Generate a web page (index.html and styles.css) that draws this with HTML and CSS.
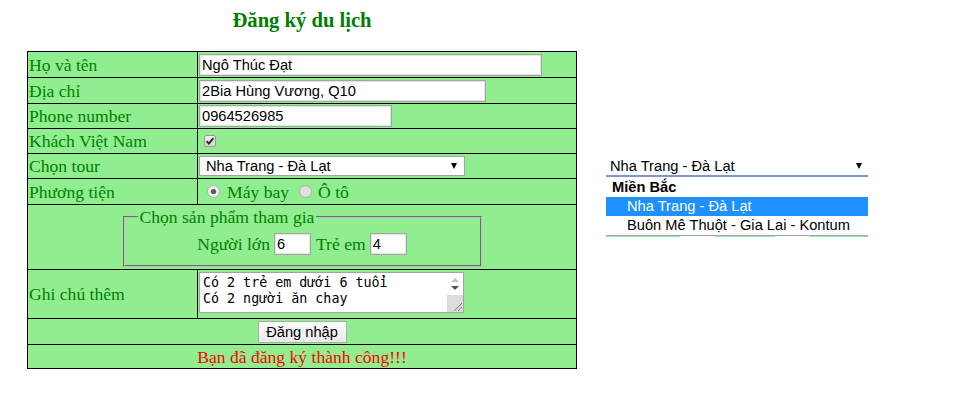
FILE: index.html
```html
<!DOCTYPE html>
<html lang="vi">
<head>
<meta charset="utf-8">
<title>Đăng ký du lịch</title>
<link rel="stylesheet" href="styles.css">
</head>
<body>
<div class="page">
  <h3 class="title">Đăng ký du lịch</h3>
  <table class="form">
    <tr class="r26">
      <td class="label">Họ và tên</td>
      <td class="field"><div class="input w-name">Ngô Thúc Đạt</div></td>
    </tr>
    <tr class="r26">
      <td class="label">Địa chỉ</td>
      <td class="field"><div class="input w-addr">2Bia Hùng Vương, Q10</div></td>
    </tr>
    <tr class="r25">
      <td class="label">Phone number</td>
      <td class="field"><div class="input w-phone">0964526985</div></td>
    </tr>
    <tr class="r25">
      <td class="label">Khách Việt Nam</td>
      <td class="field">
        <svg class="checkbox" width="12" height="12" viewBox="0 0 12 12">
          <defs><linearGradient id="cbg" x1="0" y1="0" x2="0" y2="1"><stop offset="0" stop-color="#f2f2f2"/><stop offset="1" stop-color="#d2d2d2"/></linearGradient></defs>
          <rect x="0.5" y="0.5" width="11" height="11" rx="1.5" fill="url(#cbg)" stroke="#9a9a9a"/>
          <path d="M2.6 6.2 L4.8 8.6 L9.4 3.2" fill="none" stroke="#222" stroke-width="1.8"/>
        </svg>
      </td>
    </tr>
    <tr class="r25">
      <td class="label">Chọn tour</td>
      <td class="field field-bottom">
        <div class="select w-tour"><span>Nha Trang - Đà Lạt</span><span class="arrow"></span></div>
      </td>
    </tr>
    <tr class="r25">
      <td class="label">Phương tiện</td>
      <td class="field">
        <div class="radios">
          <svg class="radio" width="13" height="13" viewBox="0 0 13 13">
            <circle cx="6.5" cy="6.5" r="6" fill="#ececec" stroke="#b4b4b4"/>
            <circle cx="6.5" cy="6.5" r="2.6" fill="#5a5a5a"/>
          </svg>
          <span class="radio-text">Máy bay</span>
          <svg class="radio radio2" width="13" height="13" viewBox="0 0 13 13">
            <circle cx="6.5" cy="6.5" r="6" fill="#e0e0e0" stroke="#adadad"/>
          </svg>
          <span class="radio-text">Ô tô</span>
        </div>
      </td>
    </tr>
    <tr class="r65">
      <td colspan="2" class="center">
        <fieldset class="group">
          <legend>Chọn sản phẩm tham gia</legend>
          <div class="group-row">
            <span>Người lớn</span><div class="input w-num">6</div>
            <span class="gap">Trẻ em</span><div class="input w-num">4</div>
          </div>
        </fieldset>
      </td>
    </tr>
    <tr class="r49">
      <td class="label">Ghi chú thêm</td>
      <td class="field field-top">
        <div class="textarea">
          <div class="ta-text">Có 2 trẻ em dưới 6 tuổi<br>Có 2 người ăn chay</div>
          <div class="ta-scroll">
            <div class="ta-arrows"><span class="up"></span><span class="down"></span></div>
            <div class="ta-track"><span class="grip"></span></div>
          </div>
        </div>
      </td>
    </tr>
    <tr class="r26">
      <td colspan="2" class="center"><div class="button">Đăng nhập</div></td>
    </tr>
    <tr class="r24">
      <td colspan="2" class="center message">Bạn đã đăng ký thành công!!!</td>
    </tr>
  </table>
</div>

<div class="popup">
  <div class="popup-select"><span>Nha Trang - Đà Lạt</span><span class="arrow"></span></div>
  <div class="popup-list">
    <div class="optgroup">Miền Bắc</div>
    <div class="option selected">Nha Trang - Đà Lạt</div>
    <div class="option">Buôn Mê Thuột - Gia Lai - Kontum</div>
  </div>
  <div class="popup-under"></div>
</div>
</body>
</html>
```

FILE: styles.css
```css
body {
  margin: 8px;
  font-family: "Liberation Serif", "Times New Roman", serif;
  font-size: 17.6px;
  color: #000;
  background: #fff;
}

.page {
  width: 550px;
  margin-left: 19px;
}

.title {
  margin: 0 0 19px;
  font-size: 20.6px;
  line-height: 24px;
  font-weight: bold;
  color: #008000;
  text-align: center;
}

.form {
  width: 550px;
  border-collapse: collapse;
  background: #90ee90;
  color: #008000;
}

.form td {
  border: 1px solid #000;
  padding: 1px;
  vertical-align: middle;
  line-height: 20px;
}

.r26 { height: 26px; }
.r25 { height: 25px; }
.r24 { height: 24px; }
.r65 { height: 65px; }
.r49 { height: 49px; }

.label {
  width: 167px;
  white-space: nowrap;
}

.field-bottom {
  vertical-align: bottom;
}

.form td.field-top {
  vertical-align: top;
}

.center {
  text-align: center;
}

.input {
  box-sizing: border-box;
  height: 22px;
  border: 1px solid #a3a3a3;
  box-shadow: inset 0 0 0 1px #e4e4e4;
  background: #fff;
  padding: 0 2px;
  font-family: "Liberation Sans", Arial, sans-serif;
  font-size: 14.67px;
  line-height: 20px;
  color: #000;
  text-align: left;
  white-space: nowrap;
}

.w-name { width: 343px; }
.w-addr { width: 287px; }
.w-phone { width: 193px; }
.w-num { width: 37px; display: inline-block; vertical-align: middle; }

.checkbox {
  display: block;
  margin-left: 5px;
}

.select {
  box-sizing: border-box;
  width: 266px;
  height: 20px;
  border: 1px solid #a3a3a3;
  background: #fff;
  display: flex;
  align-items: center;
  justify-content: space-between;
  padding: 0 7px 0 6px;
  margin-bottom: 1px;
  font-family: "Liberation Sans", Arial, sans-serif;
  font-size: 14.67px;
  color: #000;
}

.arrow {
  width: 0;
  height: 0;
  border-left: 3.5px solid transparent;
  border-right: 3.5px solid transparent;
  border-top: 6px solid #000;
}

.radios {
  display: flex;
  align-items: center;
  height: 23px;
}

.radio {
  display: block;
  margin-left: 8px;
  margin-right: 7px;
}

.radio2 {
  margin-left: 10px;
  margin-right: 6px;
}

.group {
  box-sizing: border-box;
  width: 359px;
  margin: 0 auto;
  padding: 6px 13px 10px;
  border: 2px groove #c0c0c0;
  text-align: left;
}

.group legend {
  padding: 0 2px;
  line-height: 20px;
  text-align: left;
}

.group-row {
  display: flex;
  justify-content: center;
  align-items: center;
  height: 22px;
}

.group-row .input {
  margin-left: 4px;
}

.group-row .gap {
  margin-left: 5px;
}

.textarea {
  box-sizing: border-box;
  width: 265px;
  height: 41px;
  border: 1px solid #a3a3a3;
  background: #fff;
  display: flex;
  margin-top: 1px;
}

.ta-text {
  flex: 1;
  padding: 2px 0 0 3px;
  font-family: "DejaVu Sans Mono", "Liberation Mono", monospace;
  font-size: 13.33px;
  line-height: 16px;
  color: #000;
  white-space: nowrap;
}

.ta-scroll {
  width: 16px;
  display: flex;
  flex-direction: column;
}

.ta-arrows {
  height: 22px;
  display: flex;
  flex-direction: column;
  align-items: center;
  padding-top: 5px;
  box-sizing: border-box;
  gap: 4px;
}

.ta-arrows .up {
  width: 0;
  height: 0;
  border-left: 4px solid transparent;
  border-right: 4px solid transparent;
  border-bottom: 4px solid #c2c2c2;
}

.ta-arrows .down {
  width: 0;
  height: 0;
  border-left: 4px solid transparent;
  border-right: 4px solid transparent;
  border-top: 4px solid #505050;
}

.ta-track {
  flex: 1;
  background: #dcdcdc;
  display: flex;
  justify-content: flex-end;
  align-items: flex-end;
}

.grip {
  width: 8px;
  height: 8px;
  margin: 0 1px 1px 0;
  background: linear-gradient(135deg, transparent 45%, #7a7a7a 45%, #7a7a7a 53%, transparent 53%, transparent 70%, #7a7a7a 70%, #7a7a7a 78%, transparent 78%);
}

.button {
  box-sizing: border-box;
  display: inline-block;
  vertical-align: middle;
  width: 89px;
  height: 22px;
  border: 1px solid #ababab;
  background: linear-gradient(#fbfbfb, #e9e9e9);
  font-family: "Liberation Sans", Arial, sans-serif;
  font-size: 14.67px;
  line-height: 20px;
  color: #000;
}

.message {
  color: #ff0000;
}

/* open dropdown list drawn on the right */
.popup {
  position: absolute;
  left: 606px;
  top: 157px;
  width: 262px;
  font-family: "Liberation Sans", Arial, sans-serif;
  font-size: 14.67px;
  color: #000;
}

.popup-select {
  height: 18px;
  line-height: 18px;
  border-bottom: 2px solid #7f99cf;
  padding: 0 6px 0 4px;
  display: flex;
  align-items: center;
  justify-content: space-between;
}

.popup-list {
  margin-top: 1px;
  border-bottom: 1px solid #9aa5c8;
}

.optgroup {
  height: 19px;
  line-height: 19px;
  padding-left: 6px;
  font-weight: bold;
}

.option {
  height: 19px;
  line-height: 19px;
  padding-left: 21px;
}

.option.selected {
  background: #1e90ff;
  color: #fff;
}

.popup-under {
  height: 1px;
  background: linear-gradient(90deg, #90ee90 0, #90ee90 74px, transparent 74px, transparent 109px, #90ee90 109px, #90ee90 169px, transparent 169px, transparent 204px, #90ee90 204px);
}
```
